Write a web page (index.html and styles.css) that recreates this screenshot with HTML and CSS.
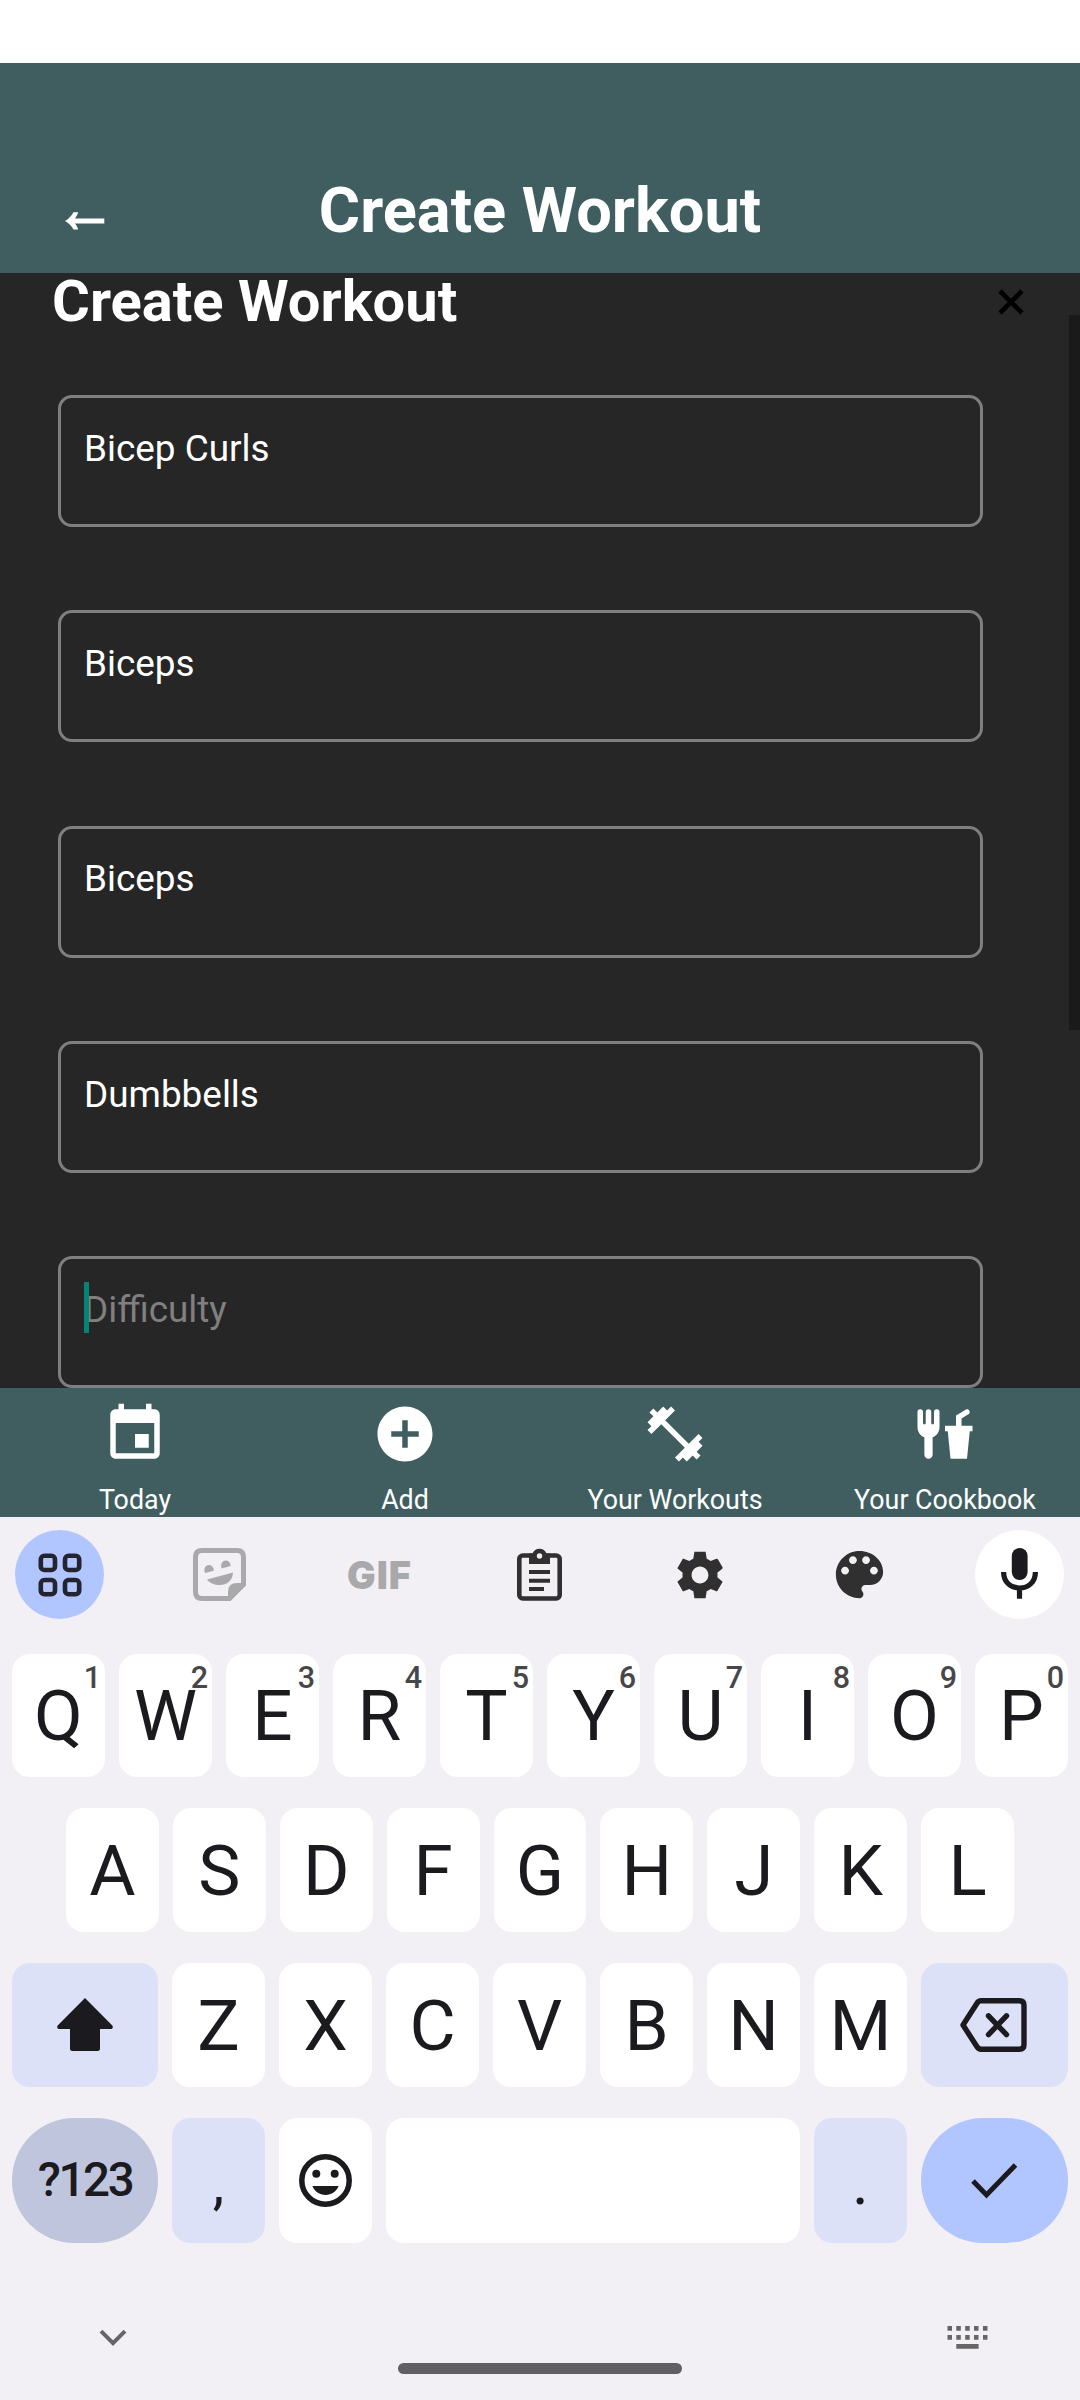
FILE: index.html
```html
<!DOCTYPE html>
<html lang="en">
<head>
<meta charset="utf-8">
<title>Create Workout</title>
<link rel="stylesheet" href="styles.css">
</head>
<body>
<div class="status-bar"></div>
<header class="header">
  <svg class="back" width="40" height="18" viewBox="0 0 40 18"><path d="M0 9C4 6.5 6.5 3.8 8.5 0.2H13.2C12.4 2.6 11.4 4.6 10 6.4H39.3V11.6H10C11.4 13.4 12.4 15.2 13.2 17.6H8.5C6.5 14 4 11.4 0 9Z"/></svg>
  <h1 class="header-title">Create Workout</h1>
</header>
<main class="content">
  <div class="form-head">
    <h2 class="form-title">Create Workout</h2>
    <svg class="close" width="26" height="26" viewBox="0 0 26 26"><path d="M2 2L24 24M24 2L2 24"/></svg>
  </div>
  <div class="fields">
    <div class="field">Bicep Curls</div>
    <div class="field">Biceps</div>
    <div class="field">Biceps</div>
    <div class="field">Dumbbells</div>
    <div class="field placeholder"><span class="caret"></span>Difficulty</div>
  </div>
  <div class="scrollbar"></div>
</main>
<nav class="tabs">
  <div class="tab">
    <svg class="tab-icon" viewBox="0 0 24 24"><path d="M17 12h-5v5h5v-5zM16 1v2H8V1H6v2H5c-1.11 0-1.99.9-1.99 2L3 19c0 1.1.89 2 2 2h14c1.1 0 2-.9 2-2V5c0-1.1-.9-2-2-2h-1V1h-2zm3 18H5V8h14v11z"/></svg>
    <span>Today</span>
  </div>
  <div class="tab">
    <svg class="tab-icon" viewBox="0 0 24 24"><path d="M12 2C6.48 2 2 6.48 2 12s4.48 10 10 10 10-4.48 10-10S17.52 2 12 2zm5 11h-4v4h-2v-4H7v-2h4V7h2v4h4v2z"/></svg>
    <span>Add</span>
  </div>
  <div class="tab">
    <svg class="tab-icon" viewBox="0 0 24 24"><path d="M20.57 14.86L22 13.43 20.57 12 17 15.57 8.43 7 12 3.43 10.57 2 9.14 3.43 7.71 2 5.57 4.14 4.14 2.71 2.71 4.14l1.43 1.43L2 7.71l1.43 1.43L2 10.57 3.43 12 7 8.43 15.57 17 12 20.57 13.43 22l1.43-1.43L16.29 22l2.14-2.14 1.43 1.43 1.43-1.43-1.43-1.43L22 16.29z"/></svg>
    <span>Your Workouts</span>
  </div>
  <div class="tab">
    <svg class="tab-icon" viewBox="0 0 24 24"><path d="M3 3A1 1 0 0 0 2 4V9.5C2 11.19 3.03 12.63 4.5 13.22V19.5A1.5 1.5 0 0 0 6 21A1.5 1.5 0 0 0 7.5 19.5V13.22C8.97 12.63 10 11.19 10 9.5V4A1 1 0 0 0 9 3A1 1 0 0 0 8 4V8A.5.5 0 0 1 7.5 8.5A.5.5 0 0 1 7 8V4A1 1 0 0 0 6 3A1 1 0 0 0 5 4V8A.5.5 0 0 1 4.5 8.5A.5.5 0 0 1 4 8V4A1 1 0 0 0 3 3M19.88 3C19.75 3 19.62 3.09 19.5 3.16L16 5.25V9H12V11H13L14 21H20L21 11H22V9H18V6.34L20.5 4.84C21 4.56 21.13 4 20.84 3.5C20.63 3.14 20.26 2.95 19.88 3Z"/></svg>
    <span>Your Cookbook</span>
  </div>
</nav>
<section class="keyboard">
  <div class="toolbar">
    <div class="tool tool-active">
      <svg width="44" height="44" viewBox="0 0 44 44" fill="none" stroke="#23242f" stroke-width="4.6"><rect x="2.8" y="2.8" width="14.2" height="14.2" rx="3.6"/><rect x="27" y="2.8" width="14.2" height="14.2" rx="3.6"/><rect x="2.8" y="27" width="14.2" height="14.2" rx="3.6"/><rect x="27" y="27" width="14.2" height="14.2" rx="3.6"/></svg>
    </div>
    <div class="tool">
      <svg width="53" height="53" viewBox="0 0 53 53"><path d="M9 2.5H44Q50.5 2.5 50.5 9V36.5L36.5 50.5H9Q2.5 50.5 2.5 44V9Q2.5 2.5 9 2.5Z" fill="none" stroke="#a9a9ab" stroke-width="5"/><g fill="#a9a9ab"><path d="M35 53V44Q35 35 44 35H53V37L37 53Z"/><path d="M14 31.5L40 24.5C39.5 33 33.5 37 27 37C21 37 16.5 35 14 31.5Z"/><path d="M12 25C10 20 13 17 16 17C18.5 17 20.5 19 21 22.7Z"/><path d="M28.5 20.5C27 15.5 30 12.5 32.7 12.5C35.5 12.5 37.5 14.5 37.7 18Z"/></g></svg>
    </div>
    <div class="tool gif">GIF</div>
    <div class="tool">
      <svg width="45" height="53" viewBox="0 0 45 53"><rect x="2.3" y="7.5" width="40.4" height="43" rx="3.5" fill="none" stroke="#303030" stroke-width="4.6"/><path fill="#303030" d="M12 5.5H15.5A7.5 7.5 0 0 1 29.5 5.5H33V16H12Z"/><circle cx="22.5" cy="8" r="2.7" fill="#f2f0f5"/><path fill="#303030" d="M12 22h21v4H12zM12 30.7h21v4H12zM12 39h15v4H12z"/></svg>
    </div>
    <div class="tool">
      <svg width="56" height="56" viewBox="0 0 24 24" fill="#303030"><path d="M19.43 12.98c.04-.32.07-.64.07-.98s-.03-.66-.07-.98l2.11-1.65c.19-.15.24-.42.12-.64l-2-3.46c-.12-.22-.39-.3-.61-.22l-2.49 1c-.52-.4-1.08-.73-1.69-.98L14.4 2H9.6l-.47 3.07c-.61.25-1.17.59-1.69.98L4.7 4.95 2.3 9.15l2.27 1.87c-.04.32-.07.65-.07.98s.03.66.07.98L2.3 14.85l2.4 4.2 2.74-1.1c.52.4 1.08.73 1.69.98L9.6 22h4.8l.47-3.07c.61-.25 1.17-.59 1.69-.98l2.74 1.1 2.4-4.2-2.27-1.87zM12 15.6c-1.98 0-3.6-1.62-3.6-3.6s1.62-3.6 3.6-3.6 3.6 1.62 3.6 3.6-1.62 3.6-3.6 3.6z"/></svg>
    </div>
    <div class="tool">
      <svg width="63" height="63" viewBox="0 0 24 24" fill="#303030"><path d="M12 3c-4.97 0-9 4.03-9 9s4.03 9 9 9c.83 0 1.5-.67 1.5-1.5 0-.39-.15-.74-.39-1.01-.23-.26-.38-.61-.38-.99 0-.83.67-1.5 1.5-1.5H16c2.76 0 5-2.24 5-5 0-4.42-4.03-8-9-8zm-5.5 9c-.83 0-1.5-.67-1.5-1.5S5.67 9 6.5 9 8 9.67 8 10.5 7.33 12 6.5 12zm3-4C8.67 8 8 7.33 8 6.5S8.67 5 9.5 5s1.5.67 1.5 1.5S10.33 8 9.5 8zm5 0c-.83 0-1.5-.67-1.5-1.5S13.67 5 14.5 5s1.5.67 1.5 1.5S15.33 8 14.5 8zm3 4c-.83 0-1.5-.67-1.5-1.5S16.67 9 17.5 9s1.5.67 1.5 1.5-.67 1.5-1.5 1.5z"/></svg>
    </div>
    <div class="tool tool-mic">
      <svg width="37" height="53" viewBox="0 0 37 53"><rect x="10.8" y="0" width="15.8" height="32" rx="7.9" fill="#1b1b1f"/><path d="M2.6 24C2.6 34 9.5 40 18.5 40S34.4 34 34.4 24M18.5 40V50.7" fill="none" stroke="#1b1b1f" stroke-width="5.2"/></svg>
    </div>
  </div>
  <div class="row">
    <div class="key">Q<sup>1</sup></div><div class="key">W<sup>2</sup></div><div class="key">E<sup>3</sup></div><div class="key">R<sup>4</sup></div><div class="key">T<sup>5</sup></div><div class="key">Y<sup>6</sup></div><div class="key">U<sup>7</sup></div><div class="key">I<sup>8</sup></div><div class="key">O<sup>9</sup></div><div class="key">P<sup>0</sup></div>
  </div>
  <div class="row row-inset">
    <div class="key">A</div><div class="key">S</div><div class="key">D</div><div class="key">F</div><div class="key">G</div><div class="key">H</div><div class="key">J</div><div class="key">K</div><div class="key">L</div>
  </div>
  <div class="row">
    <div class="key wide tint">
      <svg width="56" height="54" viewBox="0 0 56 54" fill="#1b1b1f"><path d="M28 0L55.3 27.5C56.5 29 55.5 31 53.5 31H43V50.5Q43 53 40.5 53H15.5Q13 53 13 50.5V31H2.5C.5 31-.5 29 .7 27.5Z"/></svg>
    </div><div class="key">Z</div><div class="key">X</div><div class="key">C</div><div class="key">V</div><div class="key">B</div><div class="key">N</div><div class="key">M</div><div class="key wide-end tint">
      <svg class="backspace" width="67" height="54" viewBox="0 0 67 54" fill="none" stroke="#1b1b1f" stroke-width="5.4" stroke-linejoin="round" stroke-linecap="round"><path d="M21 2.8H59.5Q64 2.8 64 7.3V46.7Q64 51.2 59.5 51.2H21Q18.5 51.2 17 48.8L3 27L17 5.2Q18.5 2.8 21 2.8Z"/><path d="M28.5 17.8L46.5 36.6M46.5 17.8L28.5 36.6"/></svg>
    </div>
  </div>
  <div class="row row-last">
    <div class="key wide symbols">?123</div><div class="key tint comma">,</div><div class="key">
      <svg width="53" height="53" viewBox="0 0 53 53" fill="#1b1b1f"><circle cx="26.5" cy="26.5" r="23.7" fill="none" stroke="#1b1b1f" stroke-width="5.5"/><circle cx="17.3" cy="19.7" r="4"/><circle cx="35.7" cy="19.7" r="4"/><path d="M13.4 32H39.6C37.5 37.5 32.5 41 26.5 41S15.5 37.5 13.4 32Z"/></svg>
    </div><div class="key space"></div><div class="key tint period">.</div><div class="key wide-end enter">
      <svg width="47" height="36" viewBox="0 0 47 36"><path d="M2 18L15.5 32L44.5 2" fill="none" stroke="#1b1b1f" stroke-width="5"/></svg>
    </div>
  </div>
  <div class="system-nav">
    <svg class="hide" width="28" height="18" viewBox="0 0 28 18"><path d="M2 2.2L14 14.2L26 2.2" fill="none" stroke="#666" stroke-width="4"/></svg>
    <div class="home-bar"></div>
    <svg class="switcher" width="42" height="24" viewBox="0 0 42 24" fill="#666"><path d="M.5 0h4.5v4.8H.5zM9.3 0h4.5v4.8H9.3zM18.2 0h4.5v4.8h-4.5zM27 0h4.5v4.8H27zM36 0h4.5v4.8H36zM.5 9h4.5v4.8H.5zM9.3 9h4.5v4.8H9.3zM18.2 9h4.5v4.8h-4.5zM27 9h4.5v4.8H27zM36 9h4.5v4.8H36zM9.3 18h22.3v4.8H9.3z"/></svg>
  </div>
</section>
</body>
</html>
```
FILE: styles.css
```css
* { box-sizing: border-box; }
body {
  margin: 0;
  width: 1080px;
  height: 2400px;
  overflow: hidden;
  background: #fff;
  color: #fff;
  font-family: Roboto, sans-serif;
}
svg { display: block; flex: none; }
.status-bar { height: 63px; }
.header {
  display: grid;
  grid-template-columns: 200px 1fr 200px;
  height: 210px;
  padding-top: 110px;
  background: #405e60;
}
.back { margin: 39px 0 0 65px; fill: #fff; }
.header-title {
  margin: 0;
  font-size: 63.2px;
  line-height: 75px;
  text-align: center;
  white-space: nowrap;
}
.content {
  position: relative;
  height: 1115px;
  overflow: hidden;
  background: #262626;
}
.form-head {
  display: flex;
  justify-content: space-between;
  align-items: center;
  height: 57px;
  padding: 0 56px 0 52px;
}
.form-title { margin: 0; font-size: 57.9px; line-height: 57px; }
.close { stroke: #000; stroke-width: 4.6; fill: none; }
.fields {
  display: flex;
  flex-direction: column;
  gap: 83.25px;
  padding: 65px 97px 0 58px;
}
.field {
  position: relative;
  flex: none;
  height: 132px;
  padding: 28.8px 23px 0;
  border: 3px solid #7f7f7f;
  border-radius: 14px;
  font-size: 36.9px;
  line-height: 44px;
}
.placeholder { color: #808080; }
.caret {
  position: absolute;
  left: 23px;
  top: 23px;
  width: 5px;
  height: 51px;
  background: #008577;
}
.scrollbar {
  position: absolute;
  right: 0;
  top: 42px;
  width: 11px;
  height: 715px;
  background: #1a1a1a;
}
.tabs {
  display: grid;
  grid-template-columns: repeat(4, 1fr);
  height: 129px;
  padding-top: 13px;
  background: #405e60;
}
.tab {
  display: flex;
  flex-direction: column;
  align-items: center;
  gap: 18px;
  font-size: 26.8px;
  line-height: 31px;
}
.tab-icon { width: 66px; height: 66px; fill: #fff; }
.keyboard {
  height: 883px;
  background: #f2f0f5;
  color: #1b1b1f;
}
.toolbar {
  display: flex;
  justify-content: space-between;
  height: 137px;
  padding: 13px 16px 0 15px;
}
.tool {
  display: flex;
  align-items: center;
  justify-content: center;
  width: 89px;
  height: 89px;
  border-radius: 50%;
}
.tool-active { background: #b1c5ff; }
.tool-mic { background: #fff; }
.gif {
  color: #a9a9ab;
  font: 900 38px Inter, sans-serif;
  letter-spacing: 1px;
}
.row {
  display: flex;
  gap: 14px;
  height: 124px;
  margin-bottom: 31px;
  padding: 0 12px;
}
.row:nth-child(2) { height: 123px; }
.row-inset { padding: 0 66px; }
.row-last { height: 125px; margin-bottom: 0; }
.key {
  position: relative;
  display: flex;
  flex: 1 1 0;
  align-items: center;
  justify-content: center;
  min-width: 0;
  border-radius: 18px;
  background: #fff;
  font-size: 71px;
  line-height: 1;
}
.key sup {
  position: absolute;
  right: 4px;
  top: 8px;
  color: #47474a;
  font-size: 30.5px;
  font-weight: 500;
  line-height: 31px;
}
.wide { flex: 0 0 146px; }
.wide-end { flex: 0 0 147px; }
.backspace { margin-right: 2px; }
.tint { background: #dde1f8; }
.symbols {
  border-radius: 62px;
  background: #c0c5de;
  font-size: 47.5px;
  font-weight: 500;
  letter-spacing: -2.4px;
}
.comma { padding-top: 4px; font-size: 58px; }
.period { padding-top: 4px; font-size: 64px; }
.space { flex: 0 0 414px; }
.enter { border-radius: 62px; background: #b1c5ff; }
.system-nav {
  display: grid;
  grid-template-columns: 398px 284px 1fr;
  height: 157px;
}
.hide { margin: 86px 0 0 99px; }
.home-bar {
  height: 11px;
  margin-top: 120px;
  border-radius: 6px;
  background: #606062;
}
.switcher { margin: 83px 0 0 265px; }
```
